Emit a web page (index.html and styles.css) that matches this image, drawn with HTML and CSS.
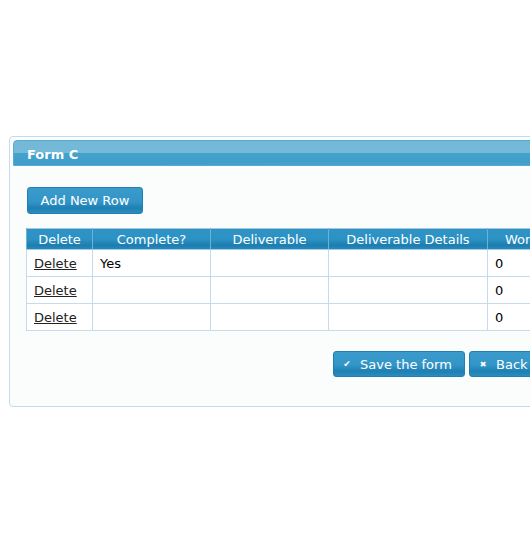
FILE: index.html
```html
<!DOCTYPE html>
<html>
<head>
<meta charset="utf-8">
<link rel="stylesheet" href="styles.css">
</head>
<body>
<div class="panel">
  <div class="panel-header">Form C</div>
  <div class="panel-body">
    <button class="btn add-btn">Add New Row</button>
    <table class="grid">
      <thead>
        <tr>
          <th class="c1">Delete</th>
          <th class="c2">Complete?</th>
          <th class="c3">Deliverable</th>
          <th class="c4">Deliverable Details</th>
          <th class="c5">Work Completed</th>
          <th class="c6">Notes</th>
        </tr>
      </thead>
      <tbody>
        <tr><td><a href="#">Delete</a></td><td>Yes</td><td></td><td></td><td>0</td><td></td></tr>
        <tr><td><a href="#">Delete</a></td><td></td><td></td><td></td><td>0</td><td></td></tr>
        <tr><td><a href="#">Delete</a></td><td></td><td></td><td></td><td>0</td><td></td></tr>
      </tbody>
    </table>
    <div class="actions">
      <button class="btn act-btn save"><span class="ico">&#10004;</span>Save the form</button>
      <button class="btn act-btn"><span class="ico x">&#10006;</span>Back</button>
    </div>
  </div>
</div>
</body>
</html>
```
FILE: styles.css
```css
html, body {
  margin: 0;
  padding: 0;
  overflow: hidden;
  background: #ffffff;
  font-family: "DejaVu Sans", Verdana, sans-serif;
  font-size: 13px;
}
.panel {
  margin: 136px 0 0 9px;
  width: 760px;
  border: 1px solid #c5dbec;
  border-radius: 4px;
  background: #fbfdfd;
  padding: 3px;
}
.panel-header {
  height: 26px;
  box-sizing: border-box;
  border: 1px solid #5ba9d2;
  border-radius: 4px 4px 0 0;
  background:
    radial-gradient(ellipse 75% 90% at 50% 150%, #43a1cb 0, #43a1cb 70%, rgba(67,161,203,0) 71%),
    linear-gradient(#74b8d8 0, #76bad9 50%, #45a2cc 51%, #3f9dc9 100%);
  color: #ffffff;
  font-weight: bold;
  font-size: 13px;
  line-height: 24px;
  padding-top: 2px;
  padding-left: 13px;
}
.panel-body {
  padding: 21px 0 26px 13px;
}
.btn {
  box-sizing: border-box;
  font-family: "DejaVu Sans", Verdana, sans-serif;
  font-size: 13px;
  color: #ffffff;
  white-space: nowrap;
  border: 1px solid #2180b3;
  border-radius: 3px;
  background: linear-gradient(#3a9acb 0, #3395c7 55%, #1e7fb3 80%, #2a8cbf 100%);
  padding: 0;
  cursor: pointer;
}
.add-btn {
  display: block;
  width: 116px;
  height: 27px;
  margin-left: 1px;
}
.grid {
  margin-top: 14px;
  border-collapse: collapse;
  border: 1px solid #a6c9e2;
  table-layout: fixed;
  width: 800px;
}
.grid th {
  height: 20px;
  padding: 0;
  color: #ffffff;
  font-weight: normal;
  text-align: center;
  white-space: nowrap;
  background: linear-gradient(#2f94c5 0, #2c91c3 50%, #1b7cb0 80%, #2a8dc0 100%);
  border-left: 1px solid #6db2d6;
  border-right: 1px solid #6db2d6;
  border-bottom: 1px solid #a6c9e2;
}
.grid td {
  height: 26px;
  padding: 0 0 0 7px;
  border: 1px solid #c5dbec;
  background: #ffffff;
  color: #000000;
}
.grid .c1 { width: 65px; }
.grid .c2 { width: 117px; }
.grid .c3 { width: 117px; }
.grid .c4 { width: 158px; }
.grid .c5 { width: 142px; }
.grid td a {
  color: #222222;
  text-decoration: underline;
}
.actions {
  display: flex;
  gap: 4px;
  margin-top: 20px;
  padding-left: 307px;
}
.act-btn {
  height: 26px;
  display: flex;
  align-items: center;
  flex-shrink: 0;
  padding: 0 12px 0 8px;
}
.act-btn.save { width: 132px; }
.ico {
  font-size: 9px;
  width: 10px;
  margin-right: 8px;
  text-align: center;
}
.ico.x { font-size: 8px; }
```
